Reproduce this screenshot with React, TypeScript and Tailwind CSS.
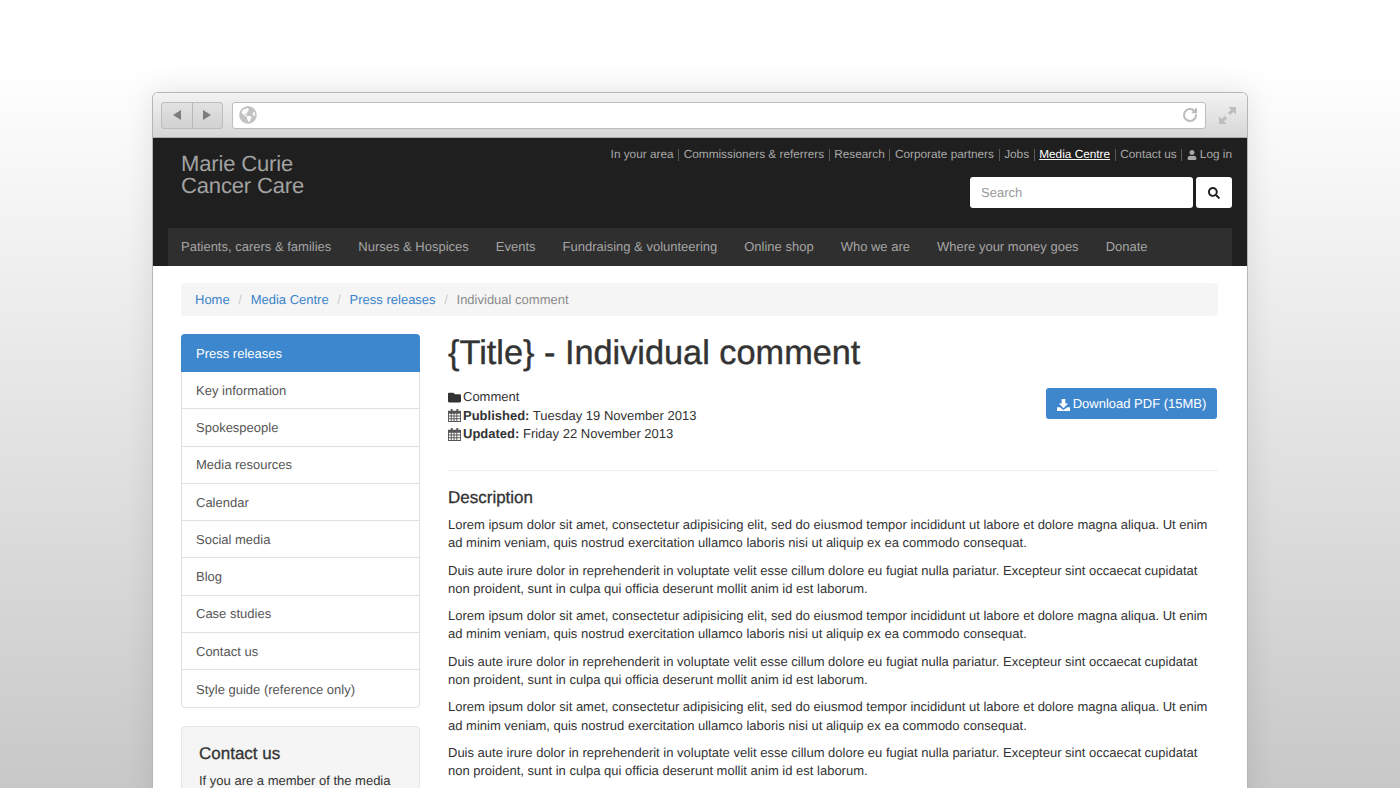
import { FaFolder, FaGlobeAmericas, FaSearch, FaUser } from 'react-icons/fa';
import { RotateCw } from 'lucide-react';

const topLinks = ['In your area', 'Commissioners & referrers', 'Research', 'Corporate partners', 'Jobs'];
const navLinks = [
    'Patients, carers & families',
    'Nurses & Hospices',
    'Events',
    'Fundraising & volunteering',
    'Online shop',
    'Who we are',
    'Where your money goes',
    'Donate',
];
const sideLinks = [
    'Key information',
    'Spokespeople',
    'Media resources',
    'Calendar',
    'Social media',
    'Blog',
    'Case studies',
    'Contact us',
    'Style guide (reference only)',
];
const loremA =
    'Lorem ipsum dolor sit amet, consectetur adipisicing elit, sed do eiusmod tempor incididunt ut labore et dolore magna aliqua. Ut enim ad minim veniam, quis nostrud exercitation ullamco laboris nisi ut aliquip ex ea commodo consequat.';
const loremB =
    'Duis aute irure dolor in reprehenderit in voluptate velit esse cillum dolore eu fugiat nulla pariatur. Excepteur sint occaecat cupidatat non proident, sunt in culpa qui officia deserunt mollit anim id est laborum.';

function CalendarIcon() {
    return (
        <svg viewBox="0 0 14 14" className="w-[13px] h-[13px] shrink-0" fill="#555">
            <rect x="3" y="0" width="2" height="3" />
            <rect x="9" y="0" width="2" height="3" />
            <path
                fillRule="evenodd"
                d="M0 2h14v12H0zM1 5v2h2V5zm3 0v2h2V5zm3 0v2h2V5zm3 0v2h3V5zM1 8v2h2V8zm3 0v2h2V8zm3 0v2h2V8zm3 0v2h3V8zM1 11v2h2v-2zm3 0v2h2v-2zm3 0v2h2v-2zm3 0v2h3v-2z"
            />
        </svg>
    );
}

function DownloadIcon() {
    return (
        <svg viewBox="0 0 14 14" className="w-[13px] h-[13px] shrink-0" fill="#fff">
            <path d="M5 1h4v5h3l-5 5-5-5h3z" />
            <path d="M0 10h3l4 3 4-3h3v4H0z" />
        </svg>
    );
}

function ExpandIcon() {
    return (
        <svg viewBox="0 0 18 18" className="w-[17px] h-[17px]" fill="#bdbdbd">
            <path d="M10 0h8v8l-2.8-2.8-3.4 3.4-2.4-2.4 3.4-3.4z" />
            <path d="M8 18H0v-8l2.8 2.8 3.4-3.4 2.4 2.4-3.4 3.4z" />
        </svg>
    );
}

function Toolbar() {
    return (
        <div className="h-[45px] flex items-center pl-2 pr-[9px] rounded-t-[5px] border-b border-[#ababab] bg-gradient-to-b from-[#f3f3f3] to-[#d6d6d6]">
            <div className="flex h-[27px] w-[62px] rounded-[3px] border border-[#bdbdbd] bg-gradient-to-b from-[#e2e2e2] to-[#d2d2d2]">
                <div className="flex-1 flex items-center justify-center border-r border-[#b8b8b8]">
                    <svg viewBox="0 0 8 10" className="w-[8px] h-[10px]" fill="#7d7d7d"><path d="M8 0v10L0 5z" /></svg>
                </div>
                <div className="flex-1 flex items-center justify-center">
                    <svg viewBox="0 0 8 10" className="w-[8px] h-[10px]" fill="#7d7d7d"><path d="M0 0v10l8-5z" /></svg>
                </div>
            </div>
            <div className="ml-[9px] flex-1 h-[27px] flex items-center justify-between pl-[6px] pr-[7px] bg-white rounded-[3px] border border-[#bdbdbd]">
                <FaGlobeAmericas className="w-[18px] h-[18px] text-[#c2c2c2]" />
                <RotateCw className="w-[16px] h-[16px] text-[#bcbcbc]" strokeWidth={3} />
            </div>
            <div className="ml-[11px] w-[21px] flex justify-center">
                <ExpandIcon />
            </div>
        </div>
    );
}

function Sep() {
    return <span className="mx-[4.6px] w-px h-[12px] bg-[#5a5a5a]" />;
}

function SiteHeader() {
    return (
        <div className="h-[128px] bg-[#1f1f1f] px-[15px] flex flex-col">
            <div className="flex-1 flex justify-between">
                <div className="pl-[13px] pt-[15px] text-[22px] leading-[22px] text-[#a2a2a2] tracking-[-0.15px]">
                    Marie Curie
                    <br />
                    Cancer Care
                </div>
                <div className="flex flex-col items-end">
                    <div className="mt-[9px] h-[16px] flex items-center text-[11.8px] text-[#a8a8a8] whitespace-nowrap">
                        {topLinks.map((l) => (
                            <span key={l} className="flex items-center">
                                {l}
                                <Sep />
                            </span>
                        ))}
                        <span className="text-white underline">Media Centre</span>
                        <Sep />
                        Contact us
                        <Sep />
                        <FaUser className="w-[10px] h-[10px] mr-[3px] text-[#a8a8a8]" />
                        Log in
                    </div>
                    <div className="mt-[14px] flex gap-[3px]">
                        <div className="w-[223px] h-[31px] bg-white rounded-[3px] flex items-center pl-[11px] text-[13px] text-[#999]">
                            Search
                        </div>
                        <div className="w-[36px] h-[31px] bg-white rounded-[3px] flex items-center justify-center">
                            <FaSearch className="w-[12px] h-[12px] text-[#222]" />
                        </div>
                    </div>
                </div>
            </div>
            <div className="h-[38px] bg-[#2f2f2f] flex items-center gap-[27px] pl-[13px] text-[13px] text-[#a5a5a5] whitespace-nowrap">
                {navLinks.map((l) => (
                    <span key={l}>{l}</span>
                ))}
            </div>
        </div>
    );
}

function Breadcrumb() {
    return (
        <div className="h-[33px] bg-[#f5f5f5] rounded-[4px] flex items-center px-[14px] text-[13px] text-[#3a83c9]">
            <span>Home</span>
            <span className="mx-[8.67px] text-[#ccc]">/</span>
            <span>Media Centre</span>
            <span className="mx-[8.67px] text-[#ccc]">/</span>
            <span>Press releases</span>
            <span className="mx-[8.67px] text-[#ccc]">/</span>
            <span className="text-[#8a8a8a]">Individual comment</span>
        </div>
    );
}

function Sidebar() {
    return (
        <div className="w-[239px] shrink-0">
            <div className="rounded-[4px] border border-[#e0e0e0] text-[13px] text-[#555]">
                <div className="-mx-px -mt-px h-[38px] pt-[2px] bg-[#3c87cd] rounded-t-[4px] flex items-center pl-[15px] text-white">
                    Press releases
                </div>
                {sideLinks.map((l) => (
                    <div
                        key={l}
                        className="h-[37.27px] pt-px flex items-center pl-[14px] border-b border-[#e0e0e0] last:border-b-0"
                    >
                        {l}
                    </div>
                ))}
            </div>
            <div className="mt-[18px] h-[120px] bg-[#f5f5f5] border border-[#e6e6e6] rounded-[4px] pl-[17px] pt-[17px] text-[#333]">
                <div className="text-[17px] leading-[20px] [-webkit-text-stroke:0.3px_#333]">Contact us</div>
                <div className="mt-[8px] text-[13px] leading-[18px]">If you are a member of the media</div>
            </div>
        </div>
    );
}

function Main() {
    return (
        <div className="flex-1 min-w-0 text-[13px] leading-[18.3px] text-[#333]">
            <h1 className="pt-px text-[34.3px] leading-[36px] [-webkit-text-stroke:0.4px_#333] text-[#333]">
                {'{Title} - Individual comment'}
            </h1>
            <div className="mt-[16px] flex justify-between items-start">
                <div className="pt-[1px] leading-[18.5px]">
                    <div className="flex items-center gap-[2px]">
                        <FaFolder className="w-[13px] h-[13px] text-[#333]" />
                        Comment
                    </div>
                    <div className="flex items-center gap-[2px]">
                        <CalendarIcon />
                        <span><b>Published:</b> Tuesday 19 November 2013</span>
                    </div>
                    <div className="flex items-center gap-[2px]">
                        <CalendarIcon />
                        <span><b>Updated:</b> Friday 22 November 2013</span>
                    </div>
                </div>
                <div className="mt-px mr-px h-[31px] pt-px w-[171px] bg-[#3f87cd] rounded-[3px] flex items-center justify-center gap-[3px] text-white">
                    <DownloadIcon />
                    Download PDF (15MB)
                </div>
            </div>
            <div className="mt-[26.5px] border-t border-[#eeeeee]" />
            <h2 className="mt-[17px] text-[17px] leading-[20px] [-webkit-text-stroke:0.3px_#333] text-[#333]">Description</h2>
            <div className="mt-[8px] flex flex-col gap-[9px]">
                {[loremA, loremB, loremA, loremB, loremA, loremB].map((t, i) => (
                    <p key={i}>{t}</p>
                ))}
            </div>
        </div>
    );
}

export default function App() {
    return (
        <div className="h-[788px] overflow-hidden bg-gradient-to-b from-white from-[8%] to-[#c8c8c8] pt-[92px] px-[152px] font-['Liberation_Sans',Arial,sans-serif] [text-rendering:geometricPrecision]">
            <div className="h-[720px] bg-white rounded-t-[6px] border-x border-t border-[#b5b5b5] shadow-[0_0_30px_rgba(0,0,0,0.1)]">
                <Toolbar />
                <SiteHeader />
                <div className="pl-[28px] pr-[29px] pt-[17px]">
                    <Breadcrumb />
                    <div className="mt-[18px] flex gap-[28px]">
                        <Sidebar />
                        <Main />
                    </div>
                </div>
            </div>
        </div>
    );
}
